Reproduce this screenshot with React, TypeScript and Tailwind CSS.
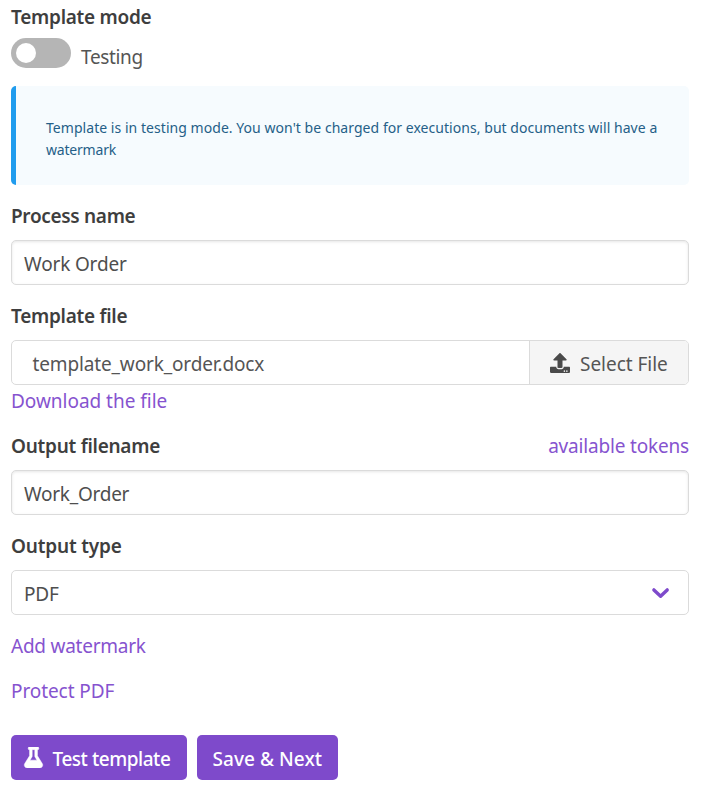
import type { ReactNode } from "react";
import { FaFlask, FaUpload } from "react-icons/fa";

const control =
  "flex h-[45px] w-full items-center rounded-[5px] border border-[#dbdbdb] bg-white pl-[12px] pt-[3px] text-[19px] leading-[30px] text-[#4e4e4e]";

function Label({ tracking, children }: { tracking: string; children: ReactNode }) {
  return <label className={`block h-[30px] font-semibold text-[#3e3e3e] ${tracking}`}>{children}</label>;
}

function TextInput({ value, tracking }: { value: string; tracking: string }) {
  return (
    <div className={`${control} shadow-[inset_0_1px_3px_rgba(10,10,10,0.1)]`}>
      <span className={tracking}>{value}</span>
    </div>
  );
}

function Link({ tracking, children }: { tracking: string; children: ReactNode }) {
  return (
    <a href="#" className={`block h-[30px] w-fit text-[#8653cf] ${tracking}`}>
      {children}
    </a>
  );
}

export default function App() {
  return (
    <main className="h-[788px] w-[726px] overflow-hidden bg-white pl-[11px] pr-[37px] pt-[2px] font-['Noto_Sans','Open_Sans',sans-serif] text-[19px] leading-[30px] whitespace-nowrap text-[#555555]">
      <Label tracking="tracking-[-0.27px]">Template mode</Label>
      <div className="mt-[6px] flex h-[30px] items-start">
        <button
          role="switch"
          aria-checked="false"
          aria-label="Template mode"
          className="flex h-[30px] w-[60px] items-center rounded-full bg-[#b5b5b5] pl-[5px]"
        >
          <span className="size-5 rounded-full bg-white" />
        </button>
        <span className="ml-[10px] pt-1 tracking-[-0.35px]">Testing</span>
      </div>

      <article className="mt-[18px] h-[99px] rounded-[5px] border-l-[5px] border-[#209cee] bg-[#f6fbfe] pl-[30px] pt-[31px] text-[14px] leading-[22px] text-[#255f88]">
        <p className="tracking-[0.046px]">
          Template is in testing mode. You won't be charged for executions, but documents will have a
        </p>
        <p className="tracking-[-0.2px]">watermark</p>
      </article>

      <section className="mt-4">
        <Label tracking="tracking-[-0.32px]">Process name</Label>
        <div className="mt-[9px]">
          <TextInput value="Work Order" tracking="tracking-[-0.158px]" />
        </div>
      </section>

      <section className="mt-4">
        <Label tracking="tracking-[-0.28px]">Template file</Label>
        <div className="mt-[9px] flex h-[45px] overflow-hidden rounded-[5px] border border-[#dbdbdb] leading-[30px]">
          <div className="flex flex-1 items-center pl-[20.5px] pt-[3px]">
            <span className="tracking-[-0.14px]">template_work_order.docx</span>
          </div>
          <button className="flex w-[159px] items-center border-l border-[#dbdbdb] bg-[#f5f5f5] pl-5 pt-[3px]">
            <FaUpload className="mb-[3px] size-5 text-[#4a4a4a]" />
            <span className="ml-[10px] tracking-[-0.035px]">Select File</span>
          </button>
        </div>
        <div className="mt-px">
          <Link tracking="tracking-[-0.027px]">Download the file</Link>
        </div>
      </section>

      <section className="mt-[15px]">
        <div className="flex justify-between">
          <Label tracking="tracking-[-0.261px]">Output filename</Label>
          <Link tracking="tracking-[-0.18px]">available tokens</Link>
        </div>
        <div className="mt-[9px]">
          <TextInput value="Work_Order" tracking="tracking-[-0.26px]" />
        </div>
      </section>

      <section className="mt-4">
        <Label tracking="tracking-[-0.168px]">Output type</Label>
        <div className={`${control} mt-[9px] justify-between pr-[17px]`}>
          <span className="tracking-[-0.183px]">PDF</span>
          <svg width="20" height="14" viewBox="0 0 20 14" fill="none" className="mb-[3px]">
            <path d="M2.9 3.9 9.6 10.2 16.2 3.9" stroke="#7e4acb" strokeWidth="3.4" strokeLinecap="round" strokeLinejoin="round" />
          </svg>
        </div>
      </section>

      <div className="mt-4 flex flex-col gap-[15px]">
        <Link tracking="tracking-[-0.24px]">Add watermark</Link>
        <Link tracking="tracking-[-0.082px]">Protect PDF</Link>
      </div>

      <div className="mt-[29px] flex gap-[10px] font-medium text-white">
        <button className="flex h-[45px] w-[176px] items-center rounded-[5px] bg-[#7e4acb] pl-[12px] pt-[3px]">
          <FaFlask className="mb-[3px] size-[21px]" stroke="currentColor" strokeWidth="12" />
          <span className="ml-[8.5px] tracking-[-0.46px]">Test template</span>
        </button>
        <button className="flex h-[45px] w-[141px] items-center rounded-[5px] bg-[#7e4acb] pl-[15.5px] pt-[3px]">
          <span className="tracking-[0.059px]">Save &amp; Next</span>
        </button>
      </div>
    </main>
  );
}
